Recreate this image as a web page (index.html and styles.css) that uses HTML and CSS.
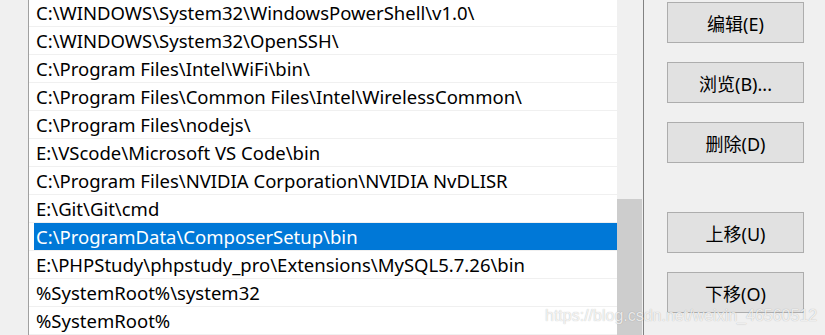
FILE: index.html
```html
<!DOCTYPE html>
<html>
<head>
<meta charset="utf-8">
<link rel="stylesheet" href="styles.css">
</head>
<body>
<div class="window">
  <div class="gutter"></div>
  <div class="listbox">
    <div class="items">
      <div class="row"><span class="cell">C:\WINDOWS\System32\WindowsPowerShell\v1.0\</span></div>
      <div class="row"><span class="cell">C:\WINDOWS\System32\OpenSSH\</span></div>
      <div class="row"><span class="cell">C:\Program Files\Intel\WiFi\bin\</span></div>
      <div class="row"><span class="cell">C:\Program Files\Common Files\Intel\WirelessCommon\</span></div>
      <div class="row"><span class="cell">C:\Program Files\nodejs\</span></div>
      <div class="row"><span class="cell">E:\VScode\Microsoft VS Code\bin</span></div>
      <div class="row"><span class="cell">C:\Program Files\NVIDIA Corporation\NVIDIA NvDLISR</span></div>
      <div class="row"><span class="cell">E:\Git\Git\cmd</span></div>
      <div class="row"><span class="cell selected">C:\ProgramData\ComposerSetup\bin</span></div>
      <div class="row"><span class="cell">E:\PHPStudy\phpstudy_pro\Extensions\MySQL5.7.26\bin</span></div>
      <div class="row"><span class="cell">%SystemRoot%\system32</span></div>
      <div class="row"><span class="cell">%SystemRoot%</span></div>
    </div>
    <div class="scrollbar"><div class="thumb"></div></div>
  </div>
  <div class="panel">
    <button class="btn">编辑(E)</button>
    <button class="btn">浏览(B)...</button>
    <button class="btn">删除(D)</button>
    <button class="btn btn-gap">上移(U)</button>
    <button class="btn">下移(O)</button>
  </div>
  <div class="watermark">https://blog.csdn.net/weixin_46560512</div>
</div>
</body>
</html>
```
FILE: styles.css
```css
* { box-sizing: border-box; }
html, body {
  margin: 0;
  padding: 0;
  background: #f0f0f0;
}
.window {
  position: relative;
  width: 825px;
  height: 335px;
  overflow: hidden;
  display: flex;
  background: #f0f0f0;
  font-family: "Noto Sans", "Noto Sans CJK SC", sans-serif;
}
.gutter {
  width: 28px;
  flex: none;
}
.listbox {
  width: 616px;
  flex: none;
  display: flex;
  border-left: 1px solid #a0a0a0;
  border-right: 1px solid #828282;
  background: #ffffff;
  height: 335px;
}
.items {
  width: 588px;
  margin-top: -1px;
}
.row {
  height: 28px;
  border-bottom: 1px solid #f0f0f0;
}
.cell {
  display: block;
  margin-left: 5px;
  padding-left: 2px;
  height: 27px;
  line-height: 27px;
  font-size: 18.5px;
  color: #000;
  white-space: nowrap;
}
.cell.selected {
  background: #0078d7;
  color: #fff;
}
.scrollbar {
  width: 26px;
  background: #f0f0f0;
  padding-top: 199px;
}
.thumb {
  width: 25px;
  height: 200px;
  background: #cdcdcd;
}
.panel {
  flex: 1;
  display: flex;
  flex-direction: column;
  align-items: flex-start;
  padding-top: 2px;
  padding-left: 23px;
  gap: 19px;
}
.btn {
  width: 137px;
  height: 41px;
  background: #e1e1e1;
  border: 1px solid #adadad;
  font-family: "Noto Sans", "Noto Sans CJK SC", sans-serif;
  font-size: 18px;
  color: #000;
  padding: 0;
  margin: 0;
}
.btn-gap {
  margin-top: 30px;
}
.watermark {
  position: absolute;
  left: 545px;
  top: 307px;
  font-family: "Liberation Sans", sans-serif;
  font-size: 16px;
  color: rgba(255, 255, 255, 0.8);
  text-shadow: 0 0 1px rgba(0, 0, 0, 0.3);
  white-space: nowrap;
}
```
